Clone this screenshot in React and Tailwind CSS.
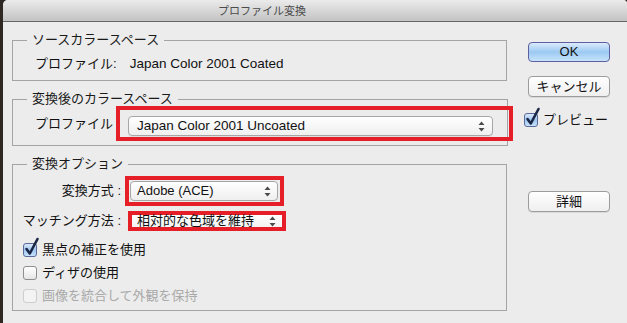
import React from 'react';

const Arrows = () => (
  <svg width="7" height="11" viewBox="0 0 7 11" className="shrink-0">
    <path d="M3.5 0.5 L6.5 4 L0.5 4 Z" fill="#4a4a4a" />
    <path d="M3.5 10.5 L6.5 7 L0.5 7 Z" fill="#4a4a4a" />
  </svg>
);

const Checkbox = ({ checked, disabled }) => (
  <span className="relative inline-block w-[14px] h-[14px] shrink-0">
    <span
      className={
        checked
          ? 'block w-[14px] h-[14px] rounded-[3px] border border-[#5b6a98] bg-gradient-to-b from-[#dbe9fb] via-[#9ec6f0] to-[#c7e2fb]'
          : disabled
          ? 'block w-[14px] h-[14px] rounded-[3px] border border-[#cdcdcd] bg-[#f3f3f3]'
          : 'block w-[14px] h-[14px] rounded-[3px] border border-[#8e8e8e] bg-gradient-to-b from-white to-[#e6e6e6]'
      }
    />
    {checked && (
      <svg width="16" height="18" viewBox="0 0 16 18" className="absolute left-[1px] top-[-5px] overflow-visible">
        <path d="M2.5 11 L5.8 15.5 L13.5 1" stroke="#1b2747" strokeWidth="2.6" fill="none" strokeLinecap="round" strokeLinejoin="round" />
      </svg>
    )}
  </span>
);

const Button = ({ children, primary }) => (
  <div
    className={
      primary
        ? 'h-[20px] w-[82px] rounded-[4px] border border-[#5f5ea0] bg-gradient-to-b from-[#dcebfc] via-[#9cc9f2] to-[#c6e3fb] flex items-center justify-center text-[13px] leading-[16px] text-[#111]'
        : 'h-[21px] w-[82px] rounded-[4px] border border-[#9c9c9c] bg-gradient-to-b from-white to-[#efefef] flex items-center justify-center text-[13px] leading-[16px] text-[#111] shadow-[0_1px_0_rgba(0,0,0,0.08)]'
    }
  >
    {children}
  </div>
);

const Group = ({ legend, children, className }) => (
  <fieldset className={'border border-[#a4a4a4] ' + className}>
    <legend className="ml-[14px] px-[5px] text-[13px] leading-[16px] text-[#1a1a1a]">{legend}</legend>
    {children}
  </fieldset>
);

export default function App() {
  return (
    <div className="w-[627px] h-[323px] bg-[#2d2824] pl-[3px] font-['Liberation_Sans','Noto_Sans_CJK_JP',sans-serif] overflow-hidden">
      <div className="h-full rounded-tl-[5px] rounded-tr-[4px] bg-[#ececec] flex flex-col overflow-hidden">
        {/* title bar */}
        <div className="h-[22px] shrink-0 bg-gradient-to-b from-[#ebebeb] to-[#c3c3c3] border-b border-[#666] flex items-center pl-[215px] text-[11px] text-[#4b4b4b] leading-[16px]">
          プロファイル変換
        </div>

        <div className="flex pl-[9px] text-[13px] leading-[16px] text-[#111]">
          {/* left column */}
          <div className="w-[495px] flex flex-col">
            <Group legend="ソースカラースペース" className="mt-[10px] pb-[8px]">
              <div className="pt-[8px] pl-[22px] flex">
                <span>プロファイル:</span>
                <span className="ml-[13px] text-[13.5px]">Japan Color 2001 Coated</span>
              </div>
            </Group>

            <Group legend="変換後のカラースペース" className="mt-[10px] pb-[4px]">
              <div className="-mt-[1px] pl-[22px] flex items-center">
                <span className="w-[78px]">プロファイル</span>
                <div className="ml-[3px] w-[397px] -mr-[6px] border-4 border-[#e61e27] pl-[8px] pr-[16px] pt-[6px] pb-[1px] relative">
                  <div className="h-[20px] rounded-[4px] border border-[#a6a6a6] bg-gradient-to-b from-white to-[#efefef] flex items-center justify-between pl-[8px] pr-[7px] shadow-[0_1px_0_rgba(0,0,0,0.06)]">
                    <span className="text-[13.5px]">Japan Color 2001 Uncoated</span>
                    <Arrows />
                  </div>
                </div>
              </div>
            </Group>

            <Group legend="変換オプション" className="mt-[10px] pb-[3px]">
              <div className="mt-[4px] flex items-center">
                <span className="w-[109px] text-right pr-[1px]">変換方式 :</span>
                <div className="ml-[3px] w-[159px] border-4 border-[#e61e27] pl-[1px] pr-[2px] py-[1px]">
                  <div className="h-[20px] rounded-[4px] border border-[#a6a6a6] bg-gradient-to-b from-white to-[#efefef] flex items-center justify-between pl-[6px] pr-[6px]">
                    <span>Adobe (ACE)</span>
                    <Arrows />
                  </div>
                </div>
              </div>
              <div className="mt-[5px] flex items-center">
                <span className="w-[109px] text-right pr-[1px]">マッチング方法 :</span>
                <div className="ml-[6px] w-[158px] border-4 border-[#e61e27]">
                  <div className="h-[12px] bg-gradient-to-b from-white to-[#f3f3f3] flex items-center justify-between pl-[5px] pr-[6px]">
                    <span className="leading-[12px]">相対的な色域を維持</span>
                    <Arrows />
                  </div>
                </div>
              </div>
              <div className="mt-[8px] h-[22px] pl-[10px] flex items-center gap-[5px]">
                <Checkbox checked />
                <span>黒点の補正を使用</span>
              </div>
              <div className="h-[23px] pl-[10px] flex items-center gap-[5px]">
                <Checkbox />
                <span>ディザの使用</span>
              </div>
              <div className="h-[23px] pl-[10px] flex items-center gap-[5px]">
                <Checkbox disabled />
                <span className="text-[#a9a9a9]">画像を統合して外観を保持</span>
              </div>
            </Group>
          </div>

          {/* right column */}
          <div className="ml-[21px] w-[82px] flex flex-col">
            <div className="mt-[20px]">
              <Button primary>OK</Button>
            </div>
            <div className="mt-[14px]">
              <Button>キャンセル</Button>
            </div>
            <div className="mt-[15px] -ml-[4px] flex items-center gap-[5px] h-[16px]">
              <Checkbox checked />
              <span>プレビュー</span>
            </div>
            <div className="mt-[63px]">
              <Button>詳細</Button>
            </div>
          </div>
        </div>
      </div>
    </div>
  );
}
